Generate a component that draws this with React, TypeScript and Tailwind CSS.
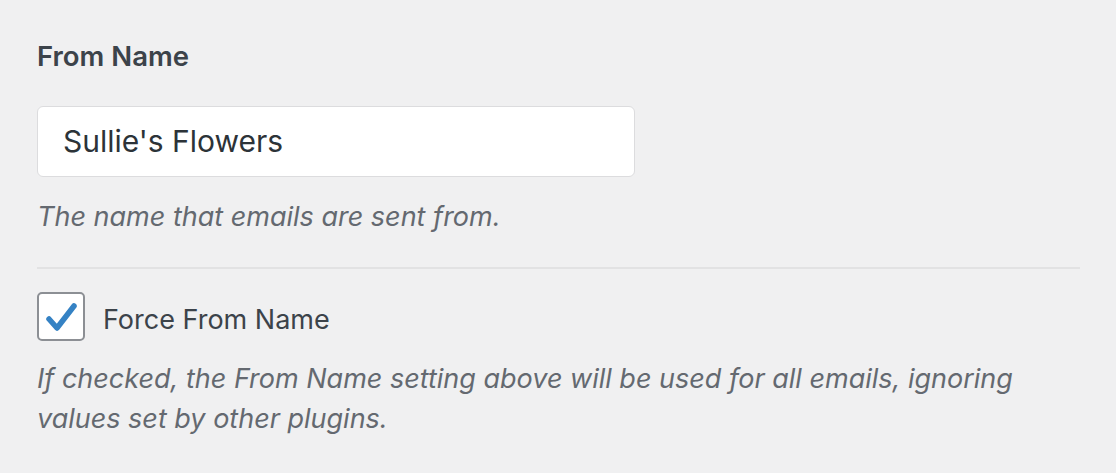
import React from "react";

export default function App() {
  return (
    <div className="w-[1116px] h-[473px] bg-[#f0f0f1] overflow-hidden" style={{ fontFamily: "Inter, 'Liberation Sans', sans-serif" }}>
      <div className="pl-[37px] pr-[36px] pt-[40px]">
        <h2 className="text-[27.5px] leading-[32px] font-semibold text-[#3c434a]">From Name</h2>
        <div className="mt-[34px] w-[598px] h-[71px] bg-white border border-[#dcdcde] rounded-[6px] flex items-center px-[25px]">
          <span className="text-[30px] text-[#2c3338]">Sullie's Flowers</span>
        </div>
        <p className="mt-[24px] text-[27px] leading-[32px] italic text-[#646970]">The name that emails are sent from.</p>
        <div className="mt-[34px] h-[2px] bg-[#e2e2e3]" />
        <div className="mt-[23px] flex items-center gap-[18px]">
          <div className="w-[48px] h-[49px] bg-white border-2 border-[#8c8f94] rounded-[5px] flex items-center justify-center">
            <svg width="32" height="32" viewBox="0 0 32 32">
              <path d="M4 18 L12 27 L29 5" fill="none" stroke="#3582c4" strokeWidth="5.5" strokeLinecap="round" strokeLinejoin="round" />
            </svg>
          </div>
          <span className="text-[27px] text-[#3c434a] pt-[8px]">Force From Name</span>
        </div>
        <p className="mt-[18px] text-[27px] leading-[40px] italic text-[#646970] w-[1010px]">
          If checked, the From Name setting above will be used for all emails, ignoring values set by other plugins.
        </p>
      </div>
    </div>
  );
}
